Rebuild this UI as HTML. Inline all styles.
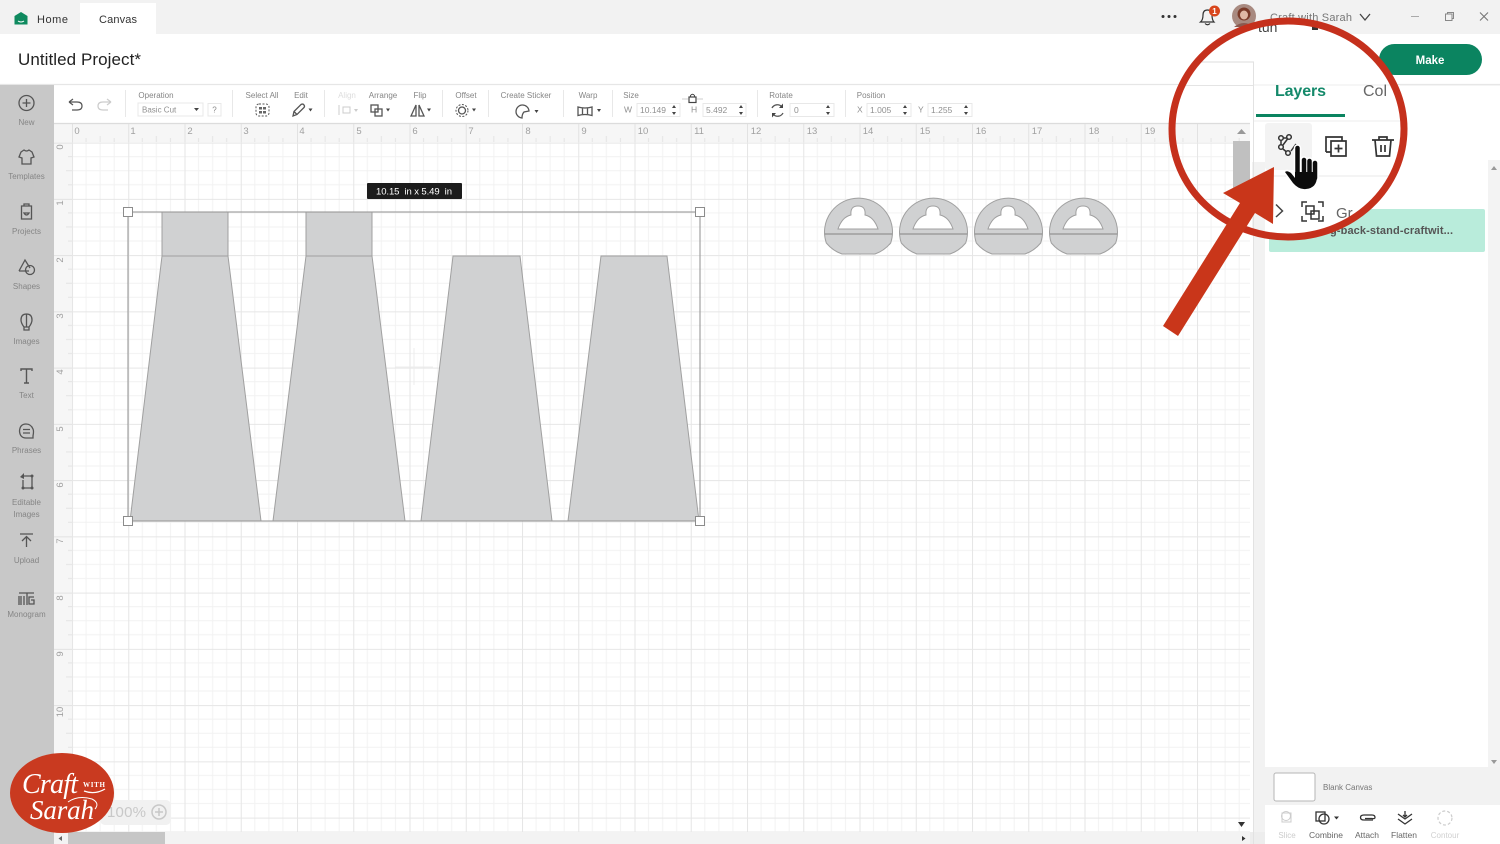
<!DOCTYPE html>
<html><head><meta charset="utf-8"><title>Untitled Project</title>
<style>
html,body{margin:0;padding:0;background:#fff;width:1500px;height:844px;overflow:hidden}
svg{display:block;font-family:"Liberation Sans",sans-serif;filter:blur(.3px)}
.l{font-size:8px;fill:#858585;text-anchor:middle}
.s{font-size:8.5px;fill:#808080;text-anchor:middle}
.r{font-size:9.5px;fill:#a0a0a0;text-anchor:middle}
.i{fill:#fff;stroke:#e8e8e8;stroke-width:1}
.v{font-size:8.5px;fill:#909090}
.ic{fill:none;stroke:#555;stroke-width:1.3}
.sb{fill:none;stroke:#555;stroke-width:1.3}
.d{stroke:#e8e8e8;stroke-width:1}
.a{fill:#444}
</style></head><body>
<svg width="1500" height="844" viewBox="0 0 1500 844" xmlns="http://www.w3.org/2000/svg">
<defs>
<pattern id="g" x="72" y="142.6" width="56.25" height="56.25" patternUnits="userSpaceOnUse">
<rect width="56.25" height="56.25" fill="#fff"/>
<path d="M14.06 0V56.25M28.12 0V56.25M42.19 0V56.25M0 14.06H56.25M0 28.12H56.25M0 42.19H56.25" stroke="#f2f2f2" stroke-width="1" fill="none"/>
<path d="M.5 0V56.25M0 .5H56.25" stroke="#e6e6e6" stroke-width="1" fill="none"/>
</pattern>
<pattern id="rt" x="72" y="124" width="56.25" height="18" patternUnits="userSpaceOnUse">
<path d="M.5 0V18" stroke="#e2e2e2"/>
<path d="M14.06 14V18M28.12 12V18M42.19 14V18" stroke="#e4e4e4"/>
</pattern>
<pattern id="rl" x="54" y="142.6" width="18" height="56.25" patternUnits="userSpaceOnUse">
<path d="M0 .5H18" stroke="#e2e2e2"/>
<path d="M14 14.06H18M12 28.12H18M14 42.19H18" stroke="#e4e4e4"/>
</pattern>
<clipPath id="ring"><ellipse cx="1288" cy="129" rx="117" ry="109"/></clipPath>
<g id="dome">
<path d="M842 254Q833 251 826.300 243A34 34 0 1 1 890.700 243Q884 251 875 254Z" fill="#d0d1d2" stroke="#a0a0a0" stroke-width="1"/>
<path d="M824.500 234H892.500" stroke="#929292" stroke-width="1.200"/>
<path d="M838 229Q842 217 851 215Q850 206 858 206Q866 206 865 215Q874 217 878 229Z" fill="#fff" stroke="#a0a0a0" stroke-width="1"/>
</g>
</defs>

<rect width="1500" height="844" fill="#fff"/>

<!-- top bar -->
<rect width="1500" height="34" fill="#f2f2f2"/>
<rect x="80" y="3" width="76" height="31" fill="#fff"/>
<path d="M14.500 24.500V16L21 12L27.500 16V24.500Z" fill="#0f8a5f"/>
<path d="M18 21Q21 23 24 21" stroke="#fff" stroke-width="1" fill="none"/>
<text x="37" y="23" font-size="11" fill="#333" textLength="31">Home</text>
<text x="99" y="23" font-size="11" fill="#333" textLength="38">Canvas</text>

<circle cx="1163" cy="16.500" r="1.500" fill="#333"/><circle cx="1169" cy="16.500" r="1.500" fill="#333"/><circle cx="1175" cy="16.500" r="1.500" fill="#333"/>
<path d="M1200.500 22Q1203 20 1203 15Q1203 10 1207.500 10Q1212 10 1212 15Q1212 20 1214 22Z" fill="none" stroke="#333" stroke-width="1.200"/>
<path d="M1205 23.500Q1207.500 26 1210 23.500" fill="none" stroke="#333" stroke-width="1.200"/>
<circle cx="1214.500" cy="11" r="5.500" fill="#d8461c"/>
<text x="1214.500" y="14" font-size="8" font-weight="bold" fill="#fff" text-anchor="middle">1</text>
<circle cx="1244" cy="16" r="12" fill="#a88a80"/>
<circle cx="1244" cy="14" r="6.500" fill="#7a3a28"/>
<ellipse cx="1244" cy="15" rx="4" ry="4.500" fill="#e0b8a4"/>
<path d="M1234 27Q1244 19 1254 27Z" fill="#8a5a50"/>
<text x="1270" y="21" font-size="11" fill="#777" textLength="82">Craft with Sarah</text>
<path d="M1360 14L1365 20L1370 14" fill="none" stroke="#444" stroke-width="1.300"/>
<path d="M1411 16.500H1419" stroke="#aaa" stroke-width="1"/>
<rect x="1445.500" y="14" width="6.500" height="6.500" fill="none" stroke="#888"/>
<path d="M1447.500 14V12.500H1453.500V18.500H1452" fill="none" stroke="#888"/>
<path d="M1480 12.500L1488 20.500M1488 12.500L1480 20.500" stroke="#777" stroke-width="1.100"/>

<!-- title -->
<text x="18" y="65" font-size="17" fill="#222" textLength="123">Untitled Project*</text>
<path d="M0 84.500H1500" stroke="#e6e6e6" stroke-width="1.200"/>

<!-- canvas -->
<rect x="72" y="142.600" width="1178" height="690" fill="url(#g)"/>
<rect x="54" y="124" width="1196" height="18.600" fill="#f6f6f6"/>
<rect x="54" y="124" width="18" height="708" fill="#f6f6f6"/>
<rect x="72" y="124" width="1178" height="18.600" fill="url(#rt)"/>
<rect x="54" y="142.600" width="18" height="690" fill="url(#rl)"/>
<path d="M54 123.500H1250" stroke="#dcdcdc" stroke-width="1.200"/>

<g>
<text class="r" x="77" y="134">0</text><text class="r" x="133" y="134">1</text><text class="r" x="190" y="134">2</text><text class="r" x="246" y="134">3</text><text class="r" x="302" y="134">4</text><text class="r" x="359" y="134">5</text><text class="r" x="415" y="134">6</text><text class="r" x="471" y="134">7</text><text class="r" x="528" y="134">8</text><text class="r" x="584" y="134">9</text><text class="r" x="643" y="134">10</text><text class="r" x="699" y="134">11</text><text class="r" x="756" y="134">12</text><text class="r" x="812" y="134">13</text><text class="r" x="868" y="134">14</text><text class="r" x="925" y="134">15</text><text class="r" x="981" y="134">16</text><text class="r" x="1037" y="134">17</text><text class="r" x="1094" y="134">18</text><text class="r" x="1150" y="134">19</text>
</g>
<g>
<text class="r" transform="translate(63,147) rotate(-90)">0</text>
<text class="r" transform="translate(63,203) rotate(-90)">1</text>
<text class="r" transform="translate(63,260) rotate(-90)">2</text>
<text class="r" transform="translate(63,316) rotate(-90)">3</text>
<text class="r" transform="translate(63,372) rotate(-90)">4</text>
<text class="r" transform="translate(63,429) rotate(-90)">5</text>
<text class="r" transform="translate(63,485) rotate(-90)">6</text>
<text class="r" transform="translate(63,541) rotate(-90)">7</text>
<text class="r" transform="translate(63,598) rotate(-90)">8</text>
<text class="r" transform="translate(63,654) rotate(-90)">9</text>
<text class="r" transform="translate(63,712) rotate(-90)">10</text>
</g>

<!-- shapes -->
<g fill="#d0d1d2" stroke="#a0a0a0" stroke-width="1">
<rect x="162" y="212" width="66" height="44"/>
<path d="M162 256H228L261 521H130Z"/>
<rect x="306" y="212" width="66" height="44"/>
<path d="M306 256H372L405 521H273Z"/>
<path d="M453 256H520L552 521H421Z"/>
<path d="M601 256H667L699 521H568Z"/>
</g>
<use href="#dome"/>
<use href="#dome" x="75"/>
<use href="#dome" x="150"/>
<use href="#dome" x="225"/>

<path d="M395 367H433M414 348V385" stroke="#ececec" stroke-width="1"/>

<rect x="128" y="212" width="572" height="309" fill="none" stroke="#999" stroke-width="1.100"/>
<g fill="#fff" stroke="#8c8c8c" stroke-width="1">
<rect x="123.500" y="207.500" width="9" height="9"/><rect x="695.500" y="207.500" width="9" height="9"/>
<rect x="123.500" y="516.500" width="9" height="9"/><rect x="695.500" y="516.500" width="9" height="9"/>
</g>
<rect x="367" y="183" width="95" height="16" rx="1" fill="#1c1c1c"/>
<text x="376" y="194.500" font-size="9.500" fill="#fff" textLength="76" xml:space="preserve">10.15  in x 5.49  in</text>

<!-- sidebar -->
<rect x="0" y="85" width="54" height="759" fill="#c8c8c8"/>
<g>
<circle class="sb" cx="26.500" cy="103" r="7.500"/><path class="sb" d="M26.500 99V107M22.500 103H30.500"/>
<path class="sb" d="M21 152L24 150Q26.500 152 29 150L32 152L34 157L31 158V164H22V158L19 157Z"/>
<path class="sb" d="M21.500 206H31.500V219H21.500Z M24 206V204H29V206"/><path class="sb" d="M24 213Q26.500 217 29 213Z"/>
<path class="sb" d="M19 271L25 260L30 268M19 271H29"/><circle class="sb" cx="30" cy="270" r="4.500"/>
<path class="sb" d="M26.500 314Q32 314 32 320Q32 323 29 327H24Q21 323 21 320Q21 314 26.500 314ZM24 327V330H29V327M26.500 314V327"/>
<path d="M21 371V369H32V371M26.500 369V383M24 383H29" fill="none" stroke="#555" stroke-width="1.400"/>
<path class="sb" d="M33 436Q34 431 33 429Q31 424 26 424Q20 424 19.500 431Q20 438 26 438H33Z"/><path class="sb" d="M23 429.500H30M23 433H30"/>
<path class="sb" d="M23 476H32V488H23V480"/><path d="M20 477L24 473V479Z" fill="#555"/><circle cx="23" cy="488" r="1.500" fill="#555"/><circle cx="32" cy="488" r="1.500" fill="#555"/><circle cx="32" cy="476" r="1.500" fill="#555"/>
<path d="M20 534H33M26.500 547V537M22 541L26.500 536.500L31 541" fill="none" stroke="#555" stroke-width="1.300"/>
<path class="sb" d="M19 593H27V605M21 596V605M24 596V605M19 596V605M27 593H34M34 597H29V604H34V600H31"/>
</g>
<g>
<text class="l" x="26.500" y="125">New</text>
<text class="l" x="26.500" y="179">Templates</text>
<text class="l" x="26.500" y="234">Projects</text>
<text class="l" x="26.500" y="289">Shapes</text>
<text class="l" x="26.500" y="344">Images</text>
<text class="l" x="26.500" y="398">Text</text>
<text class="l" x="26.500" y="453">Phrases</text>
<text class="l" x="26.500" y="505">Editable</text>
<text class="l" x="26.500" y="517">Images</text>
<text class="l" x="26.500" y="563">Upload</text>
<text class="l" x="26.500" y="617">Monogram</text>
</g>

<!-- toolbar -->
<path class="d" d="M125.500 90V117M232.500 90V117M324.500 90V117M442.500 90V117M488.500 90V117M563.500 90V117M612.500 90V117M757.500 90V117M845.500 90V117"/>
<path d="M69 102L73 99M69 102L73 105M69 102H77Q82 102 82 106Q82 110 77 110H72" fill="none" stroke="#555" stroke-width="1.200"/>
<path d="M111 102L107 99M111 102L107 105M111 102H103Q98 102 98 106Q98 110 103 110H108" fill="none" stroke="#ccc" stroke-width="1.200"/>

<text class="l" x="156" y="98">Operation</text>
<rect x="138" y="103" width="65" height="13" class="i"/>
<text x="142" y="112.500" font-size="8" fill="#909090">Basic Cut</text>
<path d="M194 108H199L196.500 111Z" class="a"/>
<rect x="208" y="103.500" width="13" height="12.500" class="i"/>
<text x="214.500" y="112.500" font-size="8" fill="#888" text-anchor="middle">?</text>

<text class="l" x="262" y="98">Select All</text>
<rect x="256" y="104" width="13" height="12" rx="3" fill="none" stroke="#555" stroke-dasharray="2 1.500"/>
<rect x="259" y="107" width="3" height="2.500" fill="#666"/><rect x="263" y="107" width="3" height="2.500" fill="#666"/><rect x="259" y="111" width="3" height="2.500" fill="#666"/><rect x="263" y="111" width="3" height="2.500" fill="#666"/>
<text class="l" x="301" y="98">Edit</text>
<path class="ic" d="M293 116L294 111.500L301 104.500Q303 103.500 304 105Q305 106.500 304 107.500L297 114.500ZM294 111.500L297 114.500"/>
<path d="M308.500 108.500H312.500L310.500 111.500Z" class="a"/>

<text x="347" y="98" font-size="8" fill="#ddd" text-anchor="middle">Align</text>
<path d="M339 105V115M343 107H350V113H343Z" fill="none" stroke="#ccc"/>
<path d="M354 109H358L356 112Z" fill="#ccc"/>
<text class="l" x="383" y="98">Arrange</text>
<rect x="371" y="105" width="7" height="7" class="ic"/><rect x="375" y="109" width="7" height="7" class="ic"/>
<path d="M386 108.500H390L388 111.500Z" class="a"/>
<text class="l" x="420" y="98">Flip</text>
<path class="ic" d="M411 116L416 105V116ZM419 116V105L424 116Z"/>
<path d="M427 108.500H431L429 111.500Z" class="a"/>
<text class="l" x="466" y="98">Offset</text>
<circle cx="462" cy="110.500" r="3.500" class="ic"/>
<circle cx="462" cy="110.500" r="6" fill="none" stroke="#555" stroke-dasharray="2 1.500"/>
<path d="M472 108.500H476L474 111.500Z" class="a"/>
<text class="l" x="526" y="98">Create Sticker</text>
<path class="ic" d="M522 118A6.500 6.500 0 1 1 529 111L524 112Q522 114 522 118Z"/>
<path d="M534.500 110H538.500L536.500 113Z" class="a"/>
<text class="l" x="588" y="98">Warp</text>
<path class="ic" d="M578 107Q585 109 592 107V115.500Q585 113.500 578 115.500ZM582.500 108V114M587.500 108V114"/>
<path d="M597 109H601L599 112Z" class="a"/>

<text class="l" x="631" y="98">Size</text>
<text class="v" x="624" y="112.500">W</text>
<rect x="637" y="103.500" width="43" height="13" class="i"/>
<text class="v" x="640" y="113">10.149</text>
<path d="M672 108L674 105L676 108ZM672 112L674 115L676 112Z" class="a"/>
<path d="M682 99H688M697 99H703" stroke="#ccc" fill="none"/>
<rect x="689" y="97" width="7" height="5.500" fill="none" stroke="#444" stroke-width="1.200"/>
<path d="M690.500 97V95.500Q692.500 93 694.500 95.500V97" fill="none" stroke="#444"/>
<text class="v" x="691" y="112.500">H</text>
<rect x="703" y="103.500" width="43" height="13" class="i"/>
<text class="v" x="706" y="113">5.492</text>
<path d="M739 108L741 105L743 108ZM739 112L741 115L743 112Z" class="a"/>

<text class="l" x="781" y="98">Rotate</text>
<path class="ic" d="M772 108A6 6 0 0 1 782 107M783 113A6 6 0 0 1 773 114"/>
<path d="M783 103.500V108H779ZM772 117.500V113H776Z" class="a"/>
<rect x="790" y="103.500" width="44" height="13" class="i"/>
<text class="v" x="794" y="113">0</text>
<path d="M826 108L828 105L830 108ZM826 112L828 115L830 112Z" class="a"/>

<text class="l" x="871" y="98">Position</text>
<text class="v" x="857" y="112.500">X</text>
<rect x="867" y="103.500" width="44" height="13" class="i"/>
<text class="v" x="870" y="113">1.005</text>
<path d="M903 108L905 105L907 108ZM903 112L905 115L907 112Z" class="a"/>
<text class="v" x="918" y="112.500">Y</text>
<rect x="928" y="103.500" width="44" height="13" class="i"/>
<text class="v" x="931" y="113">1.255</text>
<path d="M964 108L966 105L968 108ZM964 112L966 115L968 112Z" class="a"/>

<!-- canvas scrollbars -->
<path d="M1237 134L1241.500 129L1246 134Z" fill="#999"/>
<rect x="1233" y="141" width="17" height="50" fill="#c0c0c0"/>
<path d="M1238 822H1245L1241.500 827Z" fill="#333"/>
<rect x="54" y="832" width="1196" height="12" fill="#f3f3f3"/>
<rect x="68" y="832" width="97" height="12" fill="#c6c6c6"/>
<path d="M62 836V841L58.500 838.500Z" fill="#666"/>
<path d="M1242 836V841L1245.500 838.500Z" fill="#333"/>
<rect x="1250" y="832" width="15" height="12" fill="#ededed"/>

<!-- zoom pill -->
<rect x="100" y="800" width="71" height="25" rx="5" fill="#f1f1f1"/>
<text x="107" y="817" font-size="15" fill="#c8c8c8" textLength="39">100%</text>
<circle cx="159" cy="812" r="7" fill="none" stroke="#c8c8c8" stroke-width="1.500"/>
<path d="M155 812H163M159 808V816" stroke="#c8c8c8" stroke-width="1.500"/>

<!-- right panel -->
<rect x="1254" y="160" width="11" height="672" fill="#f2f2f2"/>
<rect x="1488" y="160" width="12" height="608" fill="#f3f3f3"/>
<path d="M1253.500 85V844" stroke="#e2e2e2"/>
<path d="M1491 170L1494 166L1497 170ZM1491 760H1497L1494 764Z" fill="#999"/>
<rect x="1265" y="767" width="235" height="38" fill="#f2f2f2"/>
<rect x="1274" y="773" width="41" height="28" rx="2" fill="#fff" stroke="#b5b5b5"/>
<text x="1323" y="790" font-size="8" fill="#777">Blank Canvas</text>
<rect x="1269" y="209" width="216" height="43" rx="2" fill="#b9ecdb"/>

<g>
<rect x="1282" y="813" width="9" height="9" fill="none" stroke="#ccc"/><circle cx="1286" cy="816" r="4.500" fill="none" stroke="#ccc"/>
<text x="1287" y="838" font-size="8" fill="#ccc" text-anchor="middle">Slice</text>
<rect x="1316" y="812" width="9" height="9" class="ic" style="stroke:#333"/><circle cx="1324" cy="819" r="5" class="ic" style="stroke:#333"/>
<path d="M1334 816.500H1339L1336.500 819.500Z" fill="#333"/>
<text class="s" style="fill:#666" x="1326" y="838">Combine</text>
<path class="ic" style="stroke:#333" d="M1373 820H1364Q1360.500 820 1360.500 817.500Q1360.500 815 1364 815H1372Q1375 815 1375 817.500Q1375 819 1372 818.500H1365"/>
<text class="s" style="fill:#666" x="1367" y="838">Attach</text>
<path class="ic" style="stroke:#333" d="M1405 811V817M1403 815L1405 817L1407 815M1398 814L1405 819L1412 814M1398 819L1405 824L1412 819"/>
<text class="s" style="fill:#666" x="1404" y="838">Flatten</text>
<circle cx="1445" cy="818" r="7" fill="none" stroke="#ccc" stroke-width="1.200" stroke-dasharray="3 2"/>
<text x="1445" y="838" font-size="8" fill="#d0d0d0" text-anchor="middle">Contour</text>
</g>

<!-- make button -->
<rect x="1379" y="44" width="103" height="31" rx="15.500" fill="#0b8460"/>
<text x="1430" y="64" font-size="11.500" font-weight="bold" fill="#fff" text-anchor="middle">Make</text>

<path d="M1400 85H1500" stroke="#e8e8e8"/>

<!-- inside-of-ring magnified view -->
<g clip-path="url(#ring)">
<rect x="1165" y="0" width="250" height="122" fill="#fff"/>
<rect x="1254" y="0" width="160" height="260" fill="#fff"/>
<rect x="1252" y="162" width="13" height="90" fill="#f2f2f2"/>
<text x="1258" y="32" font-size="14" fill="#444">tun</text>
<rect x="1312" y="24" width="6" height="6" fill="#333"/>
<text x="1180" y="65" font-size="11" fill="#999">Sa</text>
<path d="M1200 62H1254" stroke="#ddd"/>
<path d="M1170 85.500H1254" stroke="#e4e4e4"/>
<path d="M1253.500 62V260" stroke="#e2e2e2"/>
<path d="M1254 85H1420M1254 121H1420" stroke="#eee"/>
<text x="1275" y="96" font-size="16" font-weight="bold" fill="#14896a" textLength="51">Layers</text>
<text x="1363" y="96" font-size="16" fill="#666">Col</text>
<rect x="1256" y="114" width="89" height="3" fill="#0b8460"/>
<rect x="1265" y="123" width="47" height="47" rx="3" fill="#f3f3f3"/>
<path d="M1265 176H1420" stroke="#e8e8e8"/>
<g fill="none" stroke="#333" stroke-width="1.500">
<circle cx="1281" cy="138" r="2.300"/><circle cx="1289" cy="137" r="2.300"/><circle cx="1281" cy="147" r="2.300"/><circle cx="1288" cy="153" r="2.300"/>
<path d="M1283.300 138H1286.700M1281 140.300V144.700M1287.500 139L1283 145M1283 149L1286 151.500M1291 151L1296 144"/>
<path d="M1331 141H1346V156H1331ZM1338.500 144.500V152.500M1334.500 148.500H1342.500" stroke-width="1.700"/>
<path d="M1326 152V137H1342V141M1326 152H1331" stroke-width="1.700"/>
<path d="M1372 140H1394M1379 140V137H1387V140M1375 140L1376.500 156H1389.500L1391 140M1381 145V152M1385 145V152" stroke-width="1.700"/>
<path d="M1276 204.500L1282.500 211L1276 217" stroke="#444"/>
<path d="M1302 207V202H1307M1318 202H1323V207M1302 216V221H1307M1318 221H1323V216" stroke-width="1.500"/>
<rect x="1306" y="206" width="8" height="8" stroke-width="1.500"/><rect x="1311" y="211" width="8" height="8" stroke-width="1.500"/>
</g>
<text x="1336" y="218" font-size="15" fill="#666">Gr</text>
</g>

<text x="1330" y="234" font-size="11" fill="#555" font-weight="bold" textLength="123">g-back-stand-craftwit...</text>

<!-- hand cursor -->
<g fill="none" stroke-linecap="round">
<path d="M1297.500 148V176M1304 160V178M1309.500 161V178M1315 163V178" stroke="#fff" stroke-width="7.500"/>
<path d="M1285 172L1293 183Q1299 190 1306 189Q1317 188 1317 176V170H1296V178L1291 173Q1287 170 1285 172Z" fill="#fff" stroke="#fff" stroke-width="3"/>
<path d="M1297.500 148V176M1304 160V178M1309.500 161V178M1315 163V178" stroke="#0c0c0c" stroke-width="4.500"/>
</g>
<path d="M1285 172L1293 183Q1299 190 1306 189Q1317 188 1317 176V172H1295V178L1291 173Q1287 170 1285 172Z" fill="#0c0c0c"/>

<!-- red ring + arrow -->
<ellipse cx="1288" cy="129" rx="116" ry="108" fill="none" stroke="#c5301c" stroke-width="7"/>
<path d="M1274 167L1223 193L1240 203L1163 326L1178 336L1255 213L1273 224Z" fill="#c9361a"/>

<!-- logo -->
<ellipse cx="62" cy="793" rx="52" ry="40" fill="#c93a20"/>
<text x="22" y="793" font-family="Liberation Serif,serif" font-style="italic" font-size="28" fill="#fff" textLength="56">Craft</text>
<text x="83" y="787" font-family="Liberation Serif,serif" font-weight="bold" font-size="7" fill="#fff" textLength="22">WITH</text>
<path d="M84 791Q95 795 105 789" stroke="#fff" stroke-width="1.300" fill="none"/>
<text x="30" y="819" font-family="Liberation Serif,serif" font-style="italic" font-size="27" fill="#fff" textLength="64">Sarah</text>
<path d="M68 802Q78 795 92 799Q100 803 95 809" stroke="#fff" stroke-width="1" fill="none"/>
</svg>
</body></html>
